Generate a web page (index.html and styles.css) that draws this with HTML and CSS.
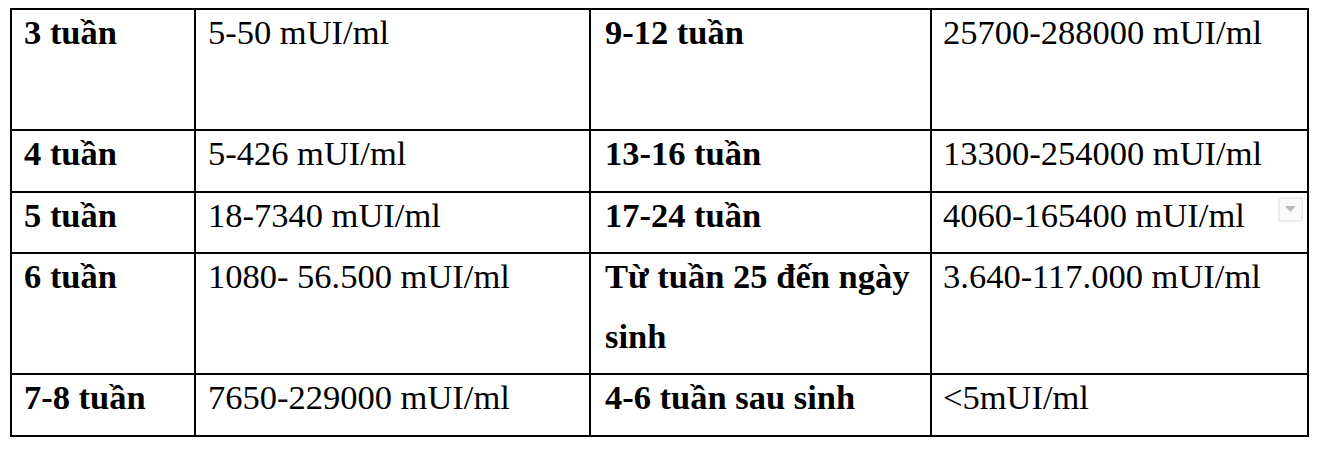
FILE: index.html
```html
<!DOCTYPE html>
<html lang="vi">
<head>
<meta charset="utf-8">
<link rel="stylesheet" href="styles.css">
</head>
<body>
<table class="hcg">
  <colgroup>
    <col class="c1"><col class="c2"><col class="c3"><col class="c4">
  </colgroup>
  <tr>
    <td class="lbl"><p>3 tuần<br>&nbsp;</p></td>
    <td class="val"><p>5-50 mUI/ml</p></td>
    <td class="lbl l2"><p>9-12 tuần</p></td>
    <td class="val v2"><p>25700-288000 mUI/ml</p></td>
  </tr>
  <tr>
    <td class="lbl"><p>4 tuần</p></td>
    <td class="val"><p>5-426 mUI/ml</p></td>
    <td class="lbl l2"><p>13-16 tuần</p></td>
    <td class="val v2"><p>13300-254000 mUI/ml</p></td>
  </tr>
  <tr>
    <td class="lbl"><p>5 tuần</p></td>
    <td class="val"><p>18-7340 mUI/ml</p></td>
    <td class="lbl l2"><p>17-24 tuần</p></td>
    <td class="val v2 has-drop"><p>4060-165400 mUI/ml</p><span class="drop"><svg width="11" height="6" viewBox="0 0 11 6"><path d="M0 0h11L5.5 6z" fill="#bdbdbd"/></svg></span></td>
  </tr>
  <tr>
    <td class="lbl"><p>6 tuần</p></td>
    <td class="val"><p>1080- 56.500 mUI/ml</p></td>
    <td class="lbl l2"><p>Từ tuần 25 đến ngày sinh</p></td>
    <td class="val v2"><p>3.640-117.000 mUI/ml</p></td>
  </tr>
  <tr>
    <td class="lbl"><p>7-8 tuần</p></td>
    <td class="val"><p>7650-229000 mUI/ml</p></td>
    <td class="lbl l2"><p>4-6 tuần sau sinh</p></td>
    <td class="val v2"><p>&lt;5mUI/ml</p></td>
  </tr>
</table>
</body>
</html>
```

FILE: styles.css
```css
html, body {
  margin: 0;
  padding: 0;
  background: #ffffff;
}

body {
  padding: 8px 0 0 10px;
  font-family: "Liberation Serif", "Times New Roman", serif;
  color: #000;
}

.hcg {
  border-collapse: collapse;
  table-layout: fixed;
  width: 1299px;
  font-size: 34.5px;
}

.c1 { width: 184px; }
.c2 { width: 395px; }
.c3 { width: 341px; }
.c4 { width: 377px; }

.hcg td {
  border: 2px solid #000;
  padding: 0 10px 0 12px;
  vertical-align: top;
}

.hcg td.l2 { padding-left: 14px; padding-right: 8px; }
.hcg td.v2 { padding-left: 11px; }

.hcg p {
  margin: -7px 0 7px;
  line-height: 59.5px;
}

.lbl { font-weight: bold; }

.has-drop { position: relative; }

.drop {
  position: absolute;
  top: 4px;
  right: 4px;
  width: 25px;
  height: 25px;
  box-sizing: border-box;
  border: 2px solid #ececec;
  background: #fbfbfb;
  display: flex;
  align-items: center;
  justify-content: center;
}
```
